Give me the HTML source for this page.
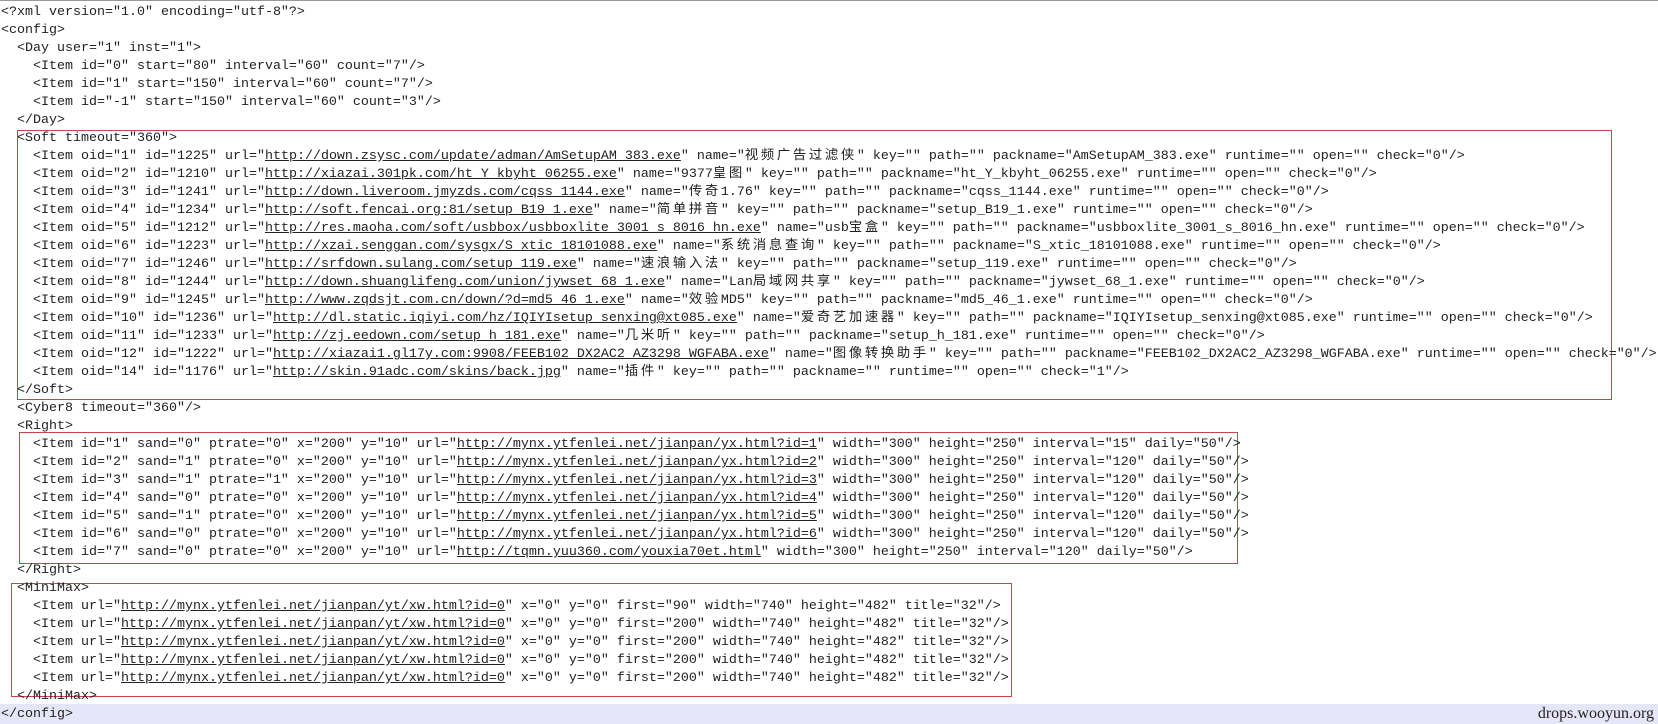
<!DOCTYPE html>
<html><head><meta charset="utf-8">
<style>
html,body{margin:0;padding:0;background:#fff;}
body{width:1658px;height:723px;position:relative;overflow:hidden;border-top:1px solid #999;box-sizing:border-box;}
#code{position:absolute;left:1px;top:3px;font-family:"Liberation Mono","Noto Sans CJK SC",monospace;font-size:13.33px;line-height:18px;color:#222;white-space:pre;}
#code u{text-decoration:underline;}
.c{letter-spacing:2.67px;}
.box{position:absolute;border:1px solid #c9424c;box-sizing:border-box;}
#bar{position:absolute;left:0;top:703px;width:1658px;height:20px;background:#e6e6f8;}
#wm{position:absolute;right:4px;top:703px;font-family:"Liberation Serif",serif;font-size:16px;line-height:20px;color:#222;}
</style></head><body>
<div id="bar"></div>
<div id="wm">drops.wooyun.org</div>
<div class="box" style="left:17px;top:129px;width:1595px;height:270px"></div>
<div class="box" style="left:19px;top:431px;width:1219px;height:132px"></div>
<div class="box" style="left:11px;top:582px;width:1001px;height:114px"></div>
<div id="code">&lt;?xml version="1.0" encoding="utf-8"?&gt;
&lt;config&gt;
  &lt;Day user="1" inst="1"&gt;
    &lt;Item id="0" start="80" interval="60" count="7"/&gt;
    &lt;Item id="1" start="150" interval="60" count="7"/&gt;
    &lt;Item id="-1" start="150" interval="60" count="3"/&gt;
  &lt;/Day&gt;
  &lt;Soft timeout="360"&gt;
    &lt;Item oid="1" id="1225" url="<u>http://down.zsysc.com/update/adman/AmSetupAM_383.exe</u>" name="<span class="c">视频广告过滤侠</span>" key="" path="" packname="AmSetupAM_383.exe" runtime="" open="" check="0"/&gt;
    &lt;Item oid="2" id="1210" url="<u>http://xiazai.301pk.com/ht_Y_kbyht_06255.exe</u>" name="9377<span class="c">皇图</span>" key="" path="" packname="ht_Y_kbyht_06255.exe" runtime="" open="" check="0"/&gt;
    &lt;Item oid="3" id="1241" url="<u>http://down.liveroom.jmyzds.com/cqss_1144.exe</u>" name="<span class="c">传奇</span>1.76" key="" path="" packname="cqss_1144.exe" runtime="" open="" check="0"/&gt;
    &lt;Item oid="4" id="1234" url="<u>http://soft.fencai.org:81/setup_B19_1.exe</u>" name="<span class="c">简单拼音</span>" key="" path="" packname="setup_B19_1.exe" runtime="" open="" check="0"/&gt;
    &lt;Item oid="5" id="1212" url="<u>http://res.maoha.com/soft/usbbox/usbboxlite_3001_s_8016_hn.exe</u>" name="usb<span class="c">宝盒</span>" key="" path="" packname="usbboxlite_3001_s_8016_hn.exe" runtime="" open="" check="0"/&gt;
    &lt;Item oid="6" id="1223" url="<u>http://xzai.senggan.com/sysgx/S_xtic_18101088.exe</u>" name="<span class="c">系统消息查询</span>" key="" path="" packname="S_xtic_18101088.exe" runtime="" open="" check="0"/&gt;
    &lt;Item oid="7" id="1246" url="<u>http://srfdown.sulang.com/setup_119.exe</u>" name="<span class="c">速浪输入法</span>" key="" path="" packname="setup_119.exe" runtime="" open="" check="0"/&gt;
    &lt;Item oid="8" id="1244" url="<u>http://down.shuanglifeng.com/union/jywset_68_1.exe</u>" name="Lan<span class="c">局域网共享</span>" key="" path="" packname="jywset_68_1.exe" runtime="" open="" check="0"/&gt;
    &lt;Item oid="9" id="1245" url="<u>http://www.zqdsjt.com.cn/down/?d=md5_46_1.exe</u>" name="<span class="c">效验</span>MD5" key="" path="" packname="md5_46_1.exe" runtime="" open="" check="0"/&gt;
    &lt;Item oid="10" id="1236" url="<u>http://dl.static.iqiyi.com/hz/IQIYIsetup_senxing@xt085.exe</u>" name="<span class="c">爱奇艺加速器</span>" key="" path="" packname="IQIYIsetup_senxing@xt085.exe" runtime="" open="" check="0"/&gt;
    &lt;Item oid="11" id="1233" url="<u>http://zj.eedown.com/setup_h_181.exe</u>" name="<span class="c">几米听</span>" key="" path="" packname="setup_h_181.exe" runtime="" open="" check="0"/&gt;
    &lt;Item oid="12" id="1222" url="<u>http://xiazai1.gl17y.com:9908/FEEB102_DX2AC2_AZ3298_WGFABA.exe</u>" name="<span class="c">图像转换助手</span>" key="" path="" packname="FEEB102_DX2AC2_AZ3298_WGFABA.exe" runtime="" open="" check="0"/&gt;
    &lt;Item oid="14" id="1176" url="<u>http://skin.91adc.com/skins/back.jpg</u>" name="<span class="c">插件</span>" key="" path="" packname="" runtime="" open="" check="1"/&gt;
  &lt;/Soft&gt;
  &lt;Cyber8 timeout="360"/&gt;
  &lt;Right&gt;
    &lt;Item id="1" sand="0" ptrate="0" x="200" y="10" url="<u>http://mynx.ytfenlei.net/jianpan/yx.html?id=1</u>" width="300" height="250" interval="15" daily="50"/&gt;
    &lt;Item id="2" sand="1" ptrate="0" x="200" y="10" url="<u>http://mynx.ytfenlei.net/jianpan/yx.html?id=2</u>" width="300" height="250" interval="120" daily="50"/&gt;
    &lt;Item id="3" sand="1" ptrate="1" x="200" y="10" url="<u>http://mynx.ytfenlei.net/jianpan/yx.html?id=3</u>" width="300" height="250" interval="120" daily="50"/&gt;
    &lt;Item id="4" sand="0" ptrate="0" x="200" y="10" url="<u>http://mynx.ytfenlei.net/jianpan/yx.html?id=4</u>" width="300" height="250" interval="120" daily="50"/&gt;
    &lt;Item id="5" sand="1" ptrate="0" x="200" y="10" url="<u>http://mynx.ytfenlei.net/jianpan/yx.html?id=5</u>" width="300" height="250" interval="120" daily="50"/&gt;
    &lt;Item id="6" sand="0" ptrate="0" x="200" y="10" url="<u>http://mynx.ytfenlei.net/jianpan/yx.html?id=6</u>" width="300" height="250" interval="120" daily="50"/&gt;
    &lt;Item id="7" sand="0" ptrate="0" x="200" y="10" url="<u>http://tqmn.yuu360.com/youxia70et.html</u>" width="300" height="250" interval="120" daily="50"/&gt;
  &lt;/Right&gt;
  &lt;MiniMax&gt;
    &lt;Item url="<u>http://mynx.ytfenlei.net/jianpan/yt/xw.html?id=0</u>" x="0" y="0" first="90" width="740" height="482" title="32"/&gt;
    &lt;Item url="<u>http://mynx.ytfenlei.net/jianpan/yt/xw.html?id=0</u>" x="0" y="0" first="200" width="740" height="482" title="32"/&gt;
    &lt;Item url="<u>http://mynx.ytfenlei.net/jianpan/yt/xw.html?id=0</u>" x="0" y="0" first="200" width="740" height="482" title="32"/&gt;
    &lt;Item url="<u>http://mynx.ytfenlei.net/jianpan/yt/xw.html?id=0</u>" x="0" y="0" first="200" width="740" height="482" title="32"/&gt;
    &lt;Item url="<u>http://mynx.ytfenlei.net/jianpan/yt/xw.html?id=0</u>" x="0" y="0" first="200" width="740" height="482" title="32"/&gt;
  &lt;/MiniMax&gt;
&lt;/config&gt;</div>
</body></html>
